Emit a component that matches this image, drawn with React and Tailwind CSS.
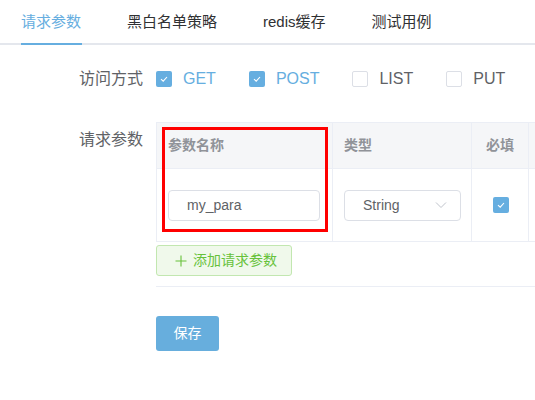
import React from "react";

const Check = () => (
  <svg width="10" height="10" viewBox="0 0 10 10" fill="none">
    <polyline points="2,5.2 4.2,7.2 8,3" stroke="white" strokeWidth="1.1" fill="none" />
  </svg>
);

const Box = ({ checked }) =>
  checked ? (
    <span className="w-[16px] h-[16px] rounded-[2px] bg-[#66aee0] flex items-center justify-center shrink-0">
      <Check />
    </span>
  ) : (
    <span className="w-[16px] h-[16px] rounded-[2px] border border-[#dcdfe6] bg-white shrink-0" />
  );

export default function App() {
  const tabs = ["请求参数", "黑白名单策略", "redis缓存", "测试用例"];
  const methods = [
    ["GET", true],
    ["POST", true],
    ["LIST", false],
    ["PUT", false],
  ];
  return (
    <div className="w-[535px] h-[400px] bg-white overflow-hidden font-['Liberation_Sans','Noto_Sans_CJK_SC',sans-serif]">
      <div className="flex h-[45px] border-b-2 border-[#e4e7ed] pl-[21px] gap-[46px]">
        {tabs.map((t, i) => (
          <div
            key={t}
            className={
              "relative h-full flex items-center pt-[1px] text-[15px] " +
              (i === 0 ? "text-[#66aee0]" : "text-[#303133]")
            }
          >
            {t}
            {i === 0 && <span className="absolute left-0 right-[-1px] bottom-[-2px] h-[2px] bg-[#66aee0]" />}
          </div>
        ))}
      </div>

      <div className="flex mt-[16px]">
        <div className="w-[143px] text-right leading-[36px] text-[16px] text-[#606266]">访问方式</div>
        <div className="ml-[13px] flex items-center h-[36px] gap-[33px]">
          {methods.map(([m, c]) => (
            <div key={m} className="flex items-center">
              <Box checked={c} />
              <span className={"ml-[11px] text-[16px] " + (c ? "text-[#66aee0]" : "text-[#606266]")}>{m}</span>
            </div>
          ))}
        </div>
      </div>

      <div className="flex mt-[25px]">
        <div className="w-[143px] shrink-0 text-right leading-[36px] text-[16px] text-[#606266]">请求参数</div>
        <div className="ml-[13px] w-[450px] shrink-0">
          <div className="relative">
            <div className="border-l border-t border-[#ebeef5] text-[14px]">
              <div className="flex h-[46px] bg-[#f5f6f8] font-bold text-[#909399]">
                <div className="w-[176px] border-r border-b border-[#ebeef5] flex items-center pl-[11px]">参数名称</div>
                <div className="w-[139px] border-r border-b border-[#ebeef5] flex items-center pl-[11px]">类型</div>
                <div className="w-[57px] border-r border-b border-[#ebeef5] flex items-center justify-center">必填</div>
                <div className="flex-1 border-b border-[#ebeef5]" />
              </div>
              <div className="flex h-[73px]">
                <div className="w-[176px] border-r border-b border-[#ebeef5] flex items-center pl-[11px]">
                  <div className="w-[152px] h-[31px] rounded-[4px] border border-[#dcdfe6] flex items-center pl-[18px] text-[#606266]">
                    my_para
                  </div>
                </div>
                <div className="w-[139px] border-r border-b border-[#ebeef5] flex items-center pl-[11px]">
                  <div className="w-[117px] h-[31px] rounded-[4px] border border-[#dcdfe6] flex items-center pl-[18px] pr-[13px] justify-between text-[#606266]">
                    <span>String</span>
                    <svg width="12" height="8" viewBox="0 0 12 8" fill="none">
                      <polyline points="1,1.5 6,6.5 11,1.5" stroke="#c0c4cc" strokeWidth="1" fill="none" />
                    </svg>
                  </div>
                </div>
                <div className="w-[57px] border-r border-b border-[#ebeef5] flex items-center justify-center pl-[2px]">
                  <Box checked />
                </div>
                <div className="flex-1 border-b border-[#ebeef5]" />
              </div>
            </div>
            <div className="absolute left-[6px] top-[5px] w-[166px] h-[105px] border-[3px] border-[#ff0000]" />
          </div>

          <div className="pt-[3px] pb-[10px] border-b border-[#ebeef5]">
            <div className="w-[136px] h-[31px] rounded-[3px] border border-[#c2e7b0] bg-[#f0f9eb] flex items-center pl-[18px] text-[14px] text-[#67c23a]">
              <svg width="12" height="12" viewBox="0 0 12 12" fill="none" className="mr-[6px]">
                <path d="M6 0.5V11.5M0.5 6H11.5" stroke="#67c23a" strokeWidth="1.1" />
              </svg>
              添加请求参数
            </div>
          </div>

          <div className="mt-[29px] w-[63px] h-[35px] rounded-[3px] bg-[#67aedd] flex items-center justify-center text-white text-[14px]">
            保存
          </div>
        </div>
      </div>
    </div>
  );
}
